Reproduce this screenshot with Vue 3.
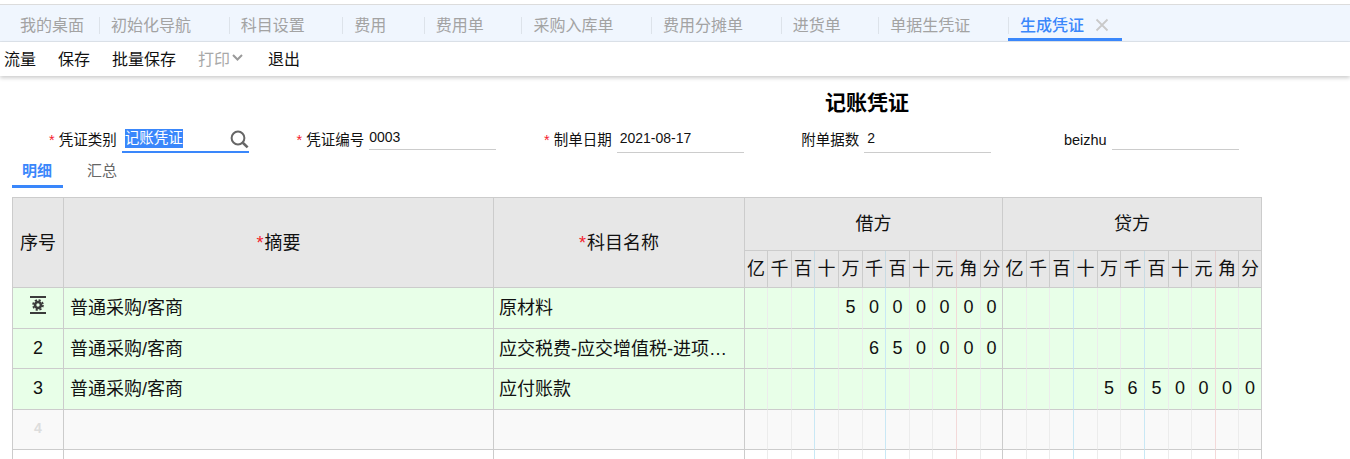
<script setup>
const tabs = ['初始化导航', '科目设置', '费用', '费用单', '采购入库单', '费用分摊单', '进货单', '单据生凭证']
const tools = [
  { t: '流量' },
  { t: '保存' },
  { t: '批量保存' }
]
const widths = [23,24,23,24,24,23,24,23,24,24,22,24,23,24,24,23,24,24,23,24,23,23]
const units = ['亿','千','百','十','万','千','百','十','元','角','分']
const allUnits = [...units, ...units]
const lineClass = (i) => {
  const k = i % 11
  if (k === 10) return 'line-major'
  if (k === 2 || k === 5) return 'line-blue'
  if (k === 8) return 'line-red'
  return 'line-minor'
}
const pad = (s, side) => {
  const cells = Array(22).fill('')
  const start = side === 'debit' ? 11 - s.length : 22 - s.length
  s.split('').forEach((c, i) => { cells[start + i] = c })
  return cells
}
const rows = [
  { no: '', icon: true, memo: '普通采购/客商', subject: '原材料', digits: pad('5000000', 'debit'), h: 41, cls: 'green' },
  { no: '2', memo: '普通采购/客商', subject: '应交税费-应交增值税-进项…', digits: pad('650000', 'debit'), h: 40, cls: 'green' },
  { no: '3', memo: '普通采购/客商', subject: '应付账款', digits: pad('5650000', 'credit'), h: 41, cls: 'green' },
  { no: '4', memo: '', subject: '', digits: pad('', 'debit'), h: 40, cls: 'empty' },
  { no: '', memo: '', subject: '', digits: pad('', 'debit'), h: 40, cls: 'blank' }
]
</script>

<template>
  <div class="page">
    <nav class="tabs">
      <div class="tab first">我的桌面</div>
      <div v-for="t in tabs" :key="t" class="tab sep">{{ t }}</div>
      <div class="tab sep active">
        生成凭证
        <svg class="close" width="14" height="14" viewBox="0 0 14 14"><path d="M1.5 1.5 12.5 12.5M12.5 1.5 1.5 12.5" stroke="#c9c9c9" stroke-width="1.8" fill="none"/></svg>
      </div>
    </nav>

    <div class="toolbar">
      <span v-for="b in tools" :key="b.t" class="tool">{{ b.t }}</span>
      <span class="tool print">打印<svg width="11" height="7" viewBox="0 0 11 7"><path d="M1 1 5.5 5.5 10 1" stroke="#9a9a9a" stroke-width="2" fill="none"/></svg></span>
      <span class="tool">退出</span>
    </div>

    <h1 class="title">记账凭证</h1>

    <div class="form">
      <div class="field">
        <label><i>*</i>凭证类别</label>
        <div class="input focus">
          <span class="selected">记账凭证</span>
          <svg width="19" height="19" viewBox="0 0 19 19"><circle cx="8" cy="8" r="6.4" fill="none" stroke="#666" stroke-width="2"/><path d="M12.8 12.8 17.6 17.4" stroke="#666" stroke-width="2.6" fill="none"/></svg>
        </div>
      </div>
      <div class="field">
        <label><i>*</i>凭证编号</label>
        <div class="input short flush">0003</div>
      </div>
      <div class="field">
        <label><i>*</i>制单日期</label>
        <div class="input">2021-08-17</div>
      </div>
      <div class="field">
        <label>附单据数</label>
        <div class="input">2</div>
      </div>
      <div class="field">
        <label>beizhu</label>
        <div class="input short"></div>
      </div>
    </div>

    <div class="subtabs">
      <div class="subtab on">明细</div>
      <div class="subtab">汇总</div>
    </div>

    <table class="grid">
      <colgroup>
        <col style="width:51px" />
        <col style="width:430px" />
        <col style="width:251px" />
        <col v-for="(w, i) in widths" :key="i" :style="{ width: w + 'px' }" />
      </colgroup>
      <thead>
        <tr class="h1">
          <th rowspan="2" class="major">序号</th>
          <th rowspan="2" class="major"><b>*</b>摘要</th>
          <th rowspan="2" class="major"><b>*</b>科目名称</th>
          <th colspan="11" class="major">借方</th>
          <th colspan="11" class="major">贷方</th>
        </tr>
        <tr class="h2">
          <th v-for="(u, i) in allUnits" :key="i" class="unit" :class="lineClass(i)">{{ u }}</th>
        </tr>
      </thead>
      <tbody>
        <tr v-for="(r, ri) in rows" :key="ri" :class="r.cls" :style="{ height: r.h + 'px' }">
          <td class="no major" :class="{ 'has-icon': r.icon }">
            <svg v-if="r.icon" class="gear" width="16" height="18" viewBox="0 0 16 18">
              <path d="M0 1h16M0 17h16" stroke="#3b3b3b" stroke-width="2"/>
              <circle cx="8" cy="9" r="3" fill="none" stroke="#3b3b3b" stroke-width="2.6"/>
              <circle cx="8" cy="9" r="5" fill="none" stroke="#3b3b3b" stroke-width="1.6" stroke-dasharray="2.2 1.73"/>
            </svg>
            <template v-else>{{ r.no }}</template>
          </td>
          <td class="memo major">{{ r.memo }}</td>
          <td class="subject major">{{ r.subject }}</td>
          <td v-for="(d, i) in r.digits" :key="i" class="digit" :class="lineClass(i)">{{ d }}</td>
        </tr>
      </tbody>
    </table>
  </div>
</template>

<style>
html, body { margin: 0; overflow: hidden; background: #fff; }
</style>

<style scoped>
.page {
  width: 1350px;
  height: 459px;
  overflow: hidden;
  padding-top: 4px;
  box-sizing: border-box;
  font-family: "Liberation Sans", "Noto Sans CJK SC", sans-serif;
  color: #111;
}
.tabs {
  display: flex;
  height: 36px;
  background: #f0f6fe;
  border-top: 1px solid #dcdcdc;
  border-bottom: 1px solid #dfe5ec;
  font-size: 16px;
  line-height: 42px;
  color: #a3a3a3;
}
.tab {
  position: relative;
  padding: 0 37.6px 0 12px;
  white-space: nowrap;
}
.tab.first { padding: 0 15px 0 20px; }
.tab.sep::before {
  content: "";
  position: absolute;
  left: 0;
  top: 12px;
  height: 17px;
  width: 1px;
  background: #dde3ea;
}
.tab.active {
  color: #3a87fb;
  height: 33px;
  border-bottom: 3px solid #3a87fb;
  font-weight: 500;
}
.close {
  position: absolute;
  left: 87px;
  top: 13px;
}
.toolbar {
  display: flex;
  box-sizing: border-box;
  height: 34px;
  align-items: center;
  padding: 0 0 3px 4px;
  gap: 22px;
  font-size: 16px;
  box-shadow: 0 2px 4px rgba(0, 0, 0, 0.2);
  background: #fff;
}
.tool { white-space: nowrap; }
.print { color: #a8a8a8; display: flex; align-items: center; gap: 2px; margin-right: 3px; }
.title {
  margin: 13px 0 0 384px;
  width: 966px;
  text-align: center;
  font-size: 21px;
  line-height: 28px;
  font-weight: 700;
  color: #000;
}
.form {
  display: grid;
  grid-template-columns: repeat(5, 247.5px);
  margin-top: 11px;
  padding-left: 1.2px;
  height: 25px;
}
.field {
  display: flex;
  justify-content: flex-end;
  align-items: flex-start;
  gap: 5px;
}
label {
  font-size: 14.5px;
  line-height: 24px;
  white-space: nowrap;
}
label i {
  color: #f5222d;
  font-style: normal;
  margin-right: 4px;
}
.input {
  display: flex;
  justify-content: space-between;
  box-sizing: border-box;
  width: 127px;
  height: 25px;
  padding-left: 3px;
  border-bottom: 1px solid #ccc;
  font-size: 14px;
  line-height: 21px;
}
.input.short { height: 22px; line-height: 18px; }
.input.flush { padding-left: 0; }
.input.focus {
  height: 25px;
  border-bottom: 2px solid #3a87fb;
  padding-top: 1px;
  line-height: 19px;
}
.selected {
  background: #3a87fb;
  color: #fff;
  height: 19px;
  font-size: 14.5px;
}
.input.focus svg { margin-top: 1px; }
.subtabs {
  display: flex;
  margin-left: 12px;
  height: 35px;
  gap: 14px;
  font-size: 15px;
  line-height: 36px;
  color: #666;
}
.subtab { box-sizing: border-box; height: 35px; padding: 0 11px 0 10px; }
.subtab.on {
  color: #3a87fb;
  font-weight: 700;
  border-bottom: 3px solid #3a87fb;
}
.grid {
  margin: 9px 0 0 12px;
  border-collapse: separate;
  border-spacing: 0;
  table-layout: fixed;
  width: 1250px;
  border-top: 1px solid #ccc;
  border-left: 1px solid #ccc;
  font-size: 18px;
  color: #111;
}
.grid th, .grid td {
  box-sizing: border-box;
  padding: 0 0 1px;
  font-weight: 400;
  border-bottom: 1px solid #ccc;
  overflow: hidden;
  white-space: nowrap;
  text-align: center;
}
.grid th { background: #e7e7e7; padding-bottom: 4px; }
th b { color: #f5222d; font-weight: 400; margin-right: 1px; }
.h1 { height: 53px; }
.h2 { height: 37px; }
.major { border-right: 1px solid #ccc; }
.line-major { border-right: 1px solid #ccc; }
.line-minor { border-right: 1px solid #ececec; }
.line-blue { border-right: 1px solid #c9e8f5; }
.line-red { border-right: 1px solid #f3d9d9; }
th.line-minor { border-right-color: #ccc; }
th.line-blue { border-right-color: #c9dbe3; }
th.line-red { border-right-color: #e3cfcf; }
.green td { background: #e8ffe8; }
.empty td { background: #f9f9f9; }
.blank td { background: #fff; }
.grid td.memo, .grid td.subject { text-align: left; padding-bottom: 4px; }
.grid td.memo { padding-left: 6px; }
.grid td.subject { padding-left: 5px; }
.empty .no { color: #ddd; font-size: 14px; font-weight: 700; padding-bottom: 4px; }
.grid td.has-icon { padding-bottom: 6px; }
.gear { display: block; margin: 0 auto; }
</style>
